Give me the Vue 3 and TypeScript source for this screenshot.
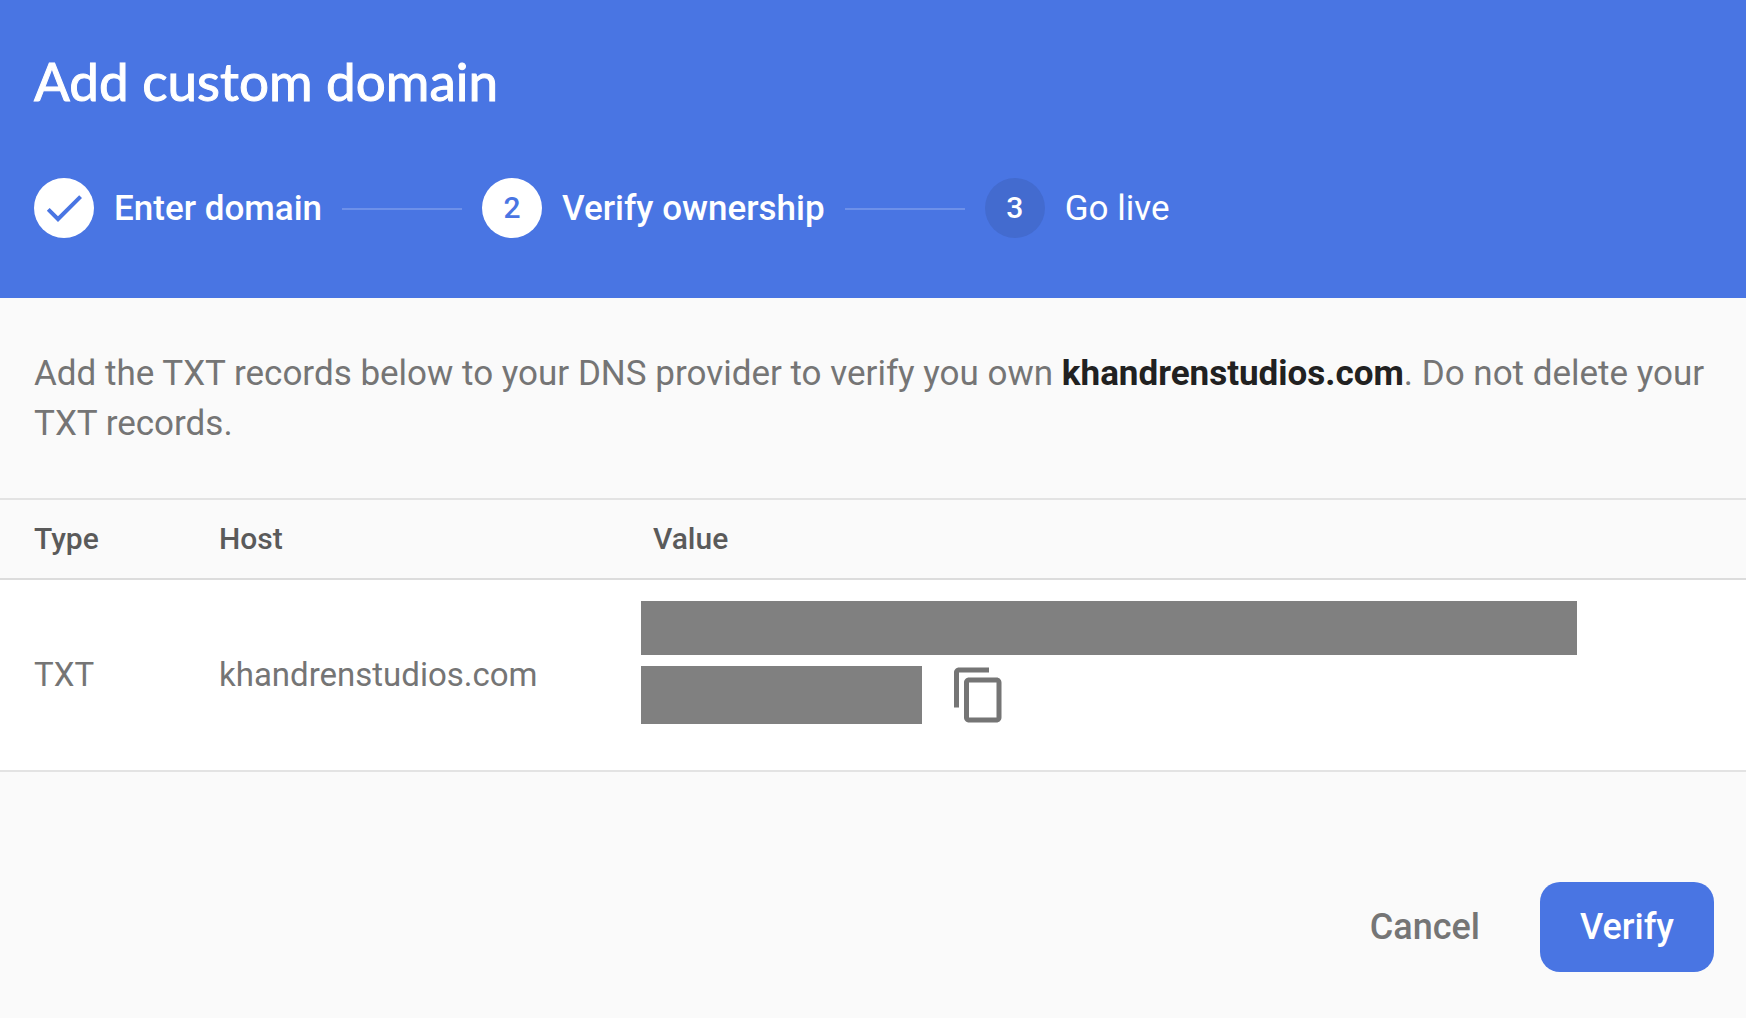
<script setup lang="ts">
import { ref } from 'vue'

type StepState = 'done' | 'current' | 'upcoming'

interface Step {
  number: number
  label: string
  state: StepState
}

interface DnsRecord {
  type: string
  host: string
}

const domain = ref<string>('khandrenstudios.com')

const steps: Step[] = [
  { number: 1, label: 'Enter domain', state: 'done' },
  { number: 2, label: 'Verify ownership', state: 'current' },
  { number: 3, label: 'Go live', state: 'upcoming' },
]

const records: DnsRecord[] = [{ type: 'TXT', host: domain.value }]
</script>

<template>
  <main class="dialog">
    <header class="header">
      <h1 class="title">Add custom domain</h1>
      <ol class="steps">
        <li v-for="step in steps" :key="step.number" class="step" :class="step.state">
          <span class="badge">
            <svg v-if="step.state === 'done'" class="check" viewBox="0 0 24 24" aria-hidden="true">
              <path d="M9 16.17 4.83 12l-1.42 1.41L9 19 21 7l-1.41-1.41z" />
            </svg>
            <template v-else>{{ step.number }}</template>
          </span>
          <span class="label">{{ step.label }}</span>
        </li>
      </ol>
    </header>

    <p class="intro">
      Add the TXT records below to your DNS provider to verify you own
      <strong>{{ domain }}</strong>. Do not delete your TXT records.
    </p>

    <table class="records">
      <colgroup>
        <col class="col-type" />
        <col class="col-host" />
        <col />
      </colgroup>
      <thead>
        <tr>
          <th scope="col">Type</th>
          <th scope="col">Host</th>
          <th scope="col">Value</th>
        </tr>
      </thead>
      <tbody>
        <tr v-for="record in records" :key="record.host">
          <td>{{ record.type }}</td>
          <td>{{ record.host }}</td>
          <td>
            <div class="value">
              <span class="mask mask-long"></span>
              <div class="value-end">
                <span class="mask mask-short"></span>
                <button type="button" class="copy" aria-label="Copy value">
                  <svg viewBox="0 0 24 24" aria-hidden="true">
                    <path
                      d="M16 1H4c-1.1 0-2 .9-2 2v14h2V3h12V1zm3 4H8c-1.1 0-2 .9-2 2v14c0 1.1.9 2 2 2h11c1.1 0 2-.9 2-2V7c0-1.1-.9-2-2-2zm0 16H8V7h11v14z"
                    />
                  </svg>
                </button>
              </div>
            </div>
          </td>
        </tr>
      </tbody>
    </table>

    <footer class="actions">
      <button type="button" class="button">Cancel</button>
      <button type="button" class="button primary">Verify</button>
    </footer>
  </main>
</template>

<style>
body {
  margin: 0;
  background: #fafafa;
}
</style>

<style scoped>
.dialog {
  font-family: Roboto, "Liberation Sans", sans-serif;
  font-size: 35px;
  line-height: 50px;
  color: #757575;
}

.header {
  padding: 51px 34px 60px;
  background: #4975e3;
  color: #fff;
}

/* The outline gives the regular face a medium weight. */
.title {
  margin: 0 0 67px;
  font-family: Lato, Roboto, sans-serif;
  font-size: 53px;
  line-height: 60px;
  font-weight: 400;
  -webkit-text-stroke: 1px currentColor;
}

.steps {
  display: flex;
  align-items: center;
  margin: 0;
  padding: 0;
  list-style: none;
}

.step {
  display: flex;
  align-items: center;
  gap: 20px;
  font-weight: 500;
}

.label {
  padding-top: 2px;
}

.step:not(:last-child)::after {
  content: "";
  width: 120px;
  height: 2px;
  margin: 2px 20px 0 0;
  background: #6d90e9;
}

.upcoming {
  font-weight: 400;
}

.badge {
  display: flex;
  align-items: center;
  justify-content: center;
  width: 60px;
  height: 60px;
  border-radius: 50%;
  background: #fff;
  color: #4975e3;
  font-size: 30px;
  font-weight: 500;
}

.upcoming .badge {
  background: #436bcf;
  color: #fff;
}

.check {
  width: 48px;
  height: 48px;
  fill: currentColor;
}

.intro {
  margin: 0;
  padding: 51px 34px 49px;
}

.intro strong {
  font-weight: 700;
  color: #212121;
}

.records {
  width: 100%;
  table-layout: fixed;
  border-collapse: separate;
  border-spacing: 0;
  border-top: 2px solid #e3e3e3;
}

.col-type {
  width: 219px;
}

.col-host {
  width: 422px;
}

th {
  height: 78px;
  padding: 0;
  border-bottom: 2px solid #dcdcdc;
  font-size: 30px;
  line-height: 40px;
  font-weight: 500;
  text-align: left;
  color: #5a5a5a;
}

th:last-child {
  padding-left: 12px;
}

td {
  padding: 0;
  border-bottom: 2px solid #e3e3e3;
  background: #fff;
  font-size: 33px;
}

th:first-child,
td:first-child {
  padding-left: 34px;
}

.value {
  display: flex;
  flex-direction: column;
  gap: 10px;
  padding: 21px 34px 45px 0;
}

.value-end {
  display: flex;
  align-items: center;
  gap: 27px;
}

.mask {
  max-width: 100%;
  background: #808080;
}

.mask-long {
  width: 936px;
  height: 54px;
}

.mask-short {
  width: 281px;
  height: 58px;
}

button {
  border: 0;
  background: none;
  font: inherit;
  color: inherit;
}

.copy {
  width: 60px;
  height: 60px;
  padding: 0;
}

.copy svg {
  display: block;
  fill: currentColor;
}

.actions {
  display: flex;
  justify-content: flex-end;
  gap: 20px;
  padding: 110px 32px 46px;
}

.button {
  height: 90px;
  padding: 0 40px;
  border-radius: 20px;
  font-size: 36px;
  font-weight: 500;
}

.primary {
  background: #4975e3;
  color: #fff;
}
</style>
